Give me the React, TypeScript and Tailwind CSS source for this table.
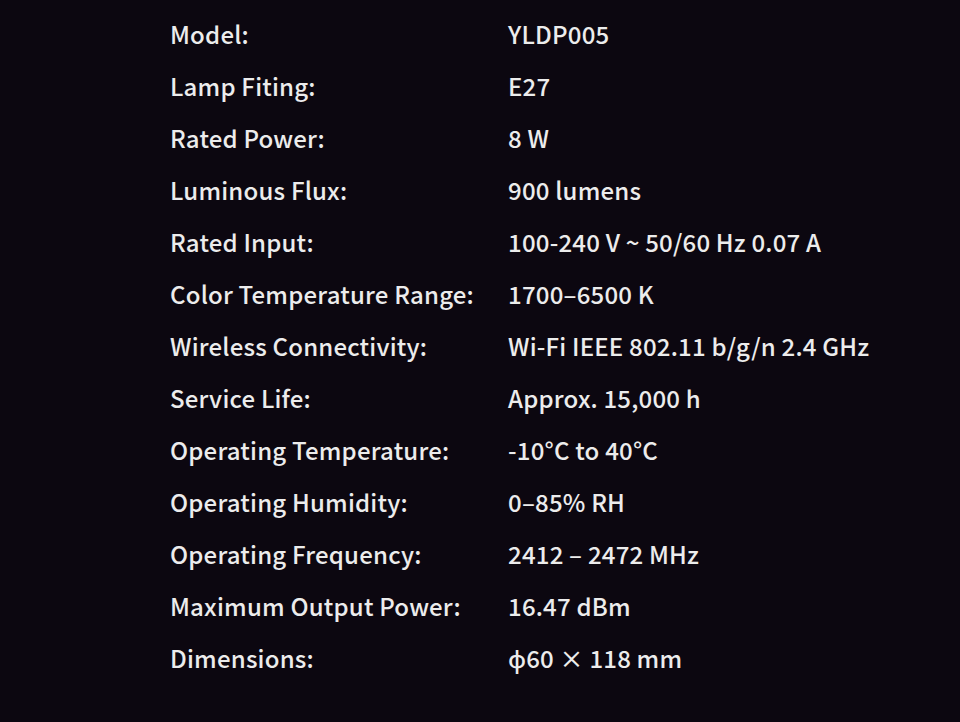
const rows: [string, string][] = [
  ["Model:", "YLDP005"],
  ["Lamp Fiting:", "E27"],
  ["Rated Power:", "8 W"],
  ["Luminous Flux:", "900 lumens"],
  ["Rated Input:", "100-240 V ~ 50/60 Hz 0.07 A"],
  ["Color Temperature Range:", "1700–6500 K"],
  ["Wireless Connectivity:", "Wi-Fi IEEE 802.11 b/g/n 2.4 GHz"],
  ["Service Life:", "Approx. 15,000 h"],
  ["Operating Temperature:", "-10°C to 40°C"],
  ["Operating Humidity:", "0–85% RH"],
  ["Operating Frequency:", "2412 – 2472 MHz"],
  ["Maximum Output Power:", "16.47 dBm"],
  ["Dimensions:", "ϕ60 × 118 mm"],
];

export default function App() {
  return (
    <div
      className="w-[960px] h-[722px] bg-[#0c0710] text-[#ececec] pt-[8px] pl-[170px] text-[24px] font-medium tracking-[0.2px]"
      style={{ fontFamily: '"Noto Sans CJK SC", "Noto Sans", sans-serif' }}
    >
      {rows.map(([k, v]) => (
        <div key={k} className="flex h-[52px] items-center">
          <div className="w-[338px]">{k}</div>
          <div>{v}</div>
        </div>
      ))}
    </div>
  );
}
